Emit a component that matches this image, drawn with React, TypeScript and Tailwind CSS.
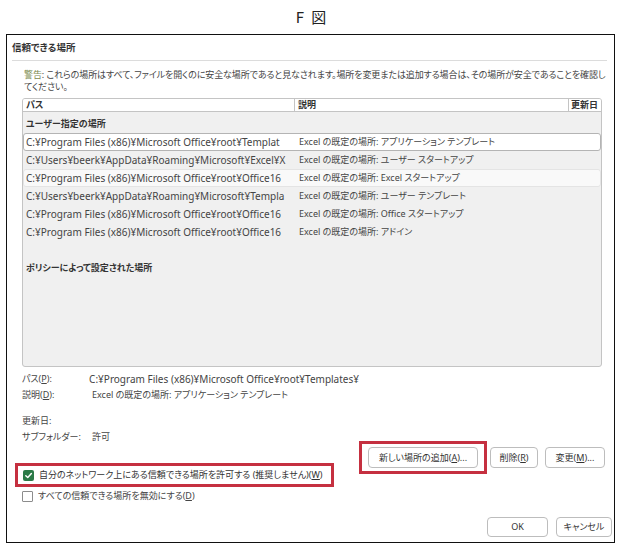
import React from "react";

const rows = [
  { path: "C:¥Program Files (x86)¥Microsoft Office¥root¥Templat", desc: "Excel の既定の場所: アプリケーション テンプレート", state: "selected" },
  { path: "C:¥Users¥beerk¥AppData¥Roaming¥Microsoft¥Excel¥X", desc: "Excel の既定の場所: ユーザー スタートアップ", state: "" },
  { path: "C:¥Program Files (x86)¥Microsoft Office¥root¥Office16", desc: "Excel の既定の場所: Excel スタートアップ", state: "hover" },
  { path: "C:¥Users¥beerk¥AppData¥Roaming¥Microsoft¥Templa", desc: "Excel の既定の場所: ユーザー テンプレート", state: "" },
  { path: "C:¥Program Files (x86)¥Microsoft Office¥root¥Office16", desc: "Excel の既定の場所: Office スタートアップ", state: "" },
  { path: "C:¥Program Files (x86)¥Microsoft Office¥root¥Office16", desc: "Excel の既定の場所: アドイン", state: "" },
];

function Btn({ label, accel, suffix = "", className = "" }: { label: string; accel: string; suffix?: string; className?: string }) {
  return (
    <div className={`h-[21px] flex items-center justify-center bg-white border border-[#bdbdbd] rounded-[4px] text-[9px] text-[#333] whitespace-nowrap ${className}`}>
      {label}(<span className="underline">{accel}</span>){suffix}
    </div>
  );
}

export default function App() {
  return (
    <div className="w-[624px] h-[556px] bg-white font-['Noto_Sans','Noto_Sans_CJK_JP',sans-serif] [font-feature-settings:'palt'] text-[#333]">
      <div className="h-[34px] flex items-center justify-center font-['Noto_Sans_CJK_JP',sans-serif] text-[15px] text-[#222] tracking-[2px]">F 図</div>

      <div className="ml-[6px] w-[609px] h-[509px] border border-[#111] flex flex-col">
        <div className="h-[25px] flex items-center pl-[5px] pt-[1px] text-[9.5px] font-bold text-[#333]">信頼できる場所</div>
        <div className="ml-[5px] mr-[7px] h-px bg-[#dcdcdc]" />

        <div className="mt-[8px] pl-[17px] text-[9px] leading-[12px] text-[#444] whitespace-nowrap tracking-[-0.1px]">
          <span className="text-[#7d8a4e]">警告</span>: これらの場所はすべて、ファイルを開くのに安全な場所であると見なされます。場所を変更または追加する場合は、その場所が安全であることを確認し
          <br />
          てください。
        </div>

        <div className="mt-[5px] ml-[15px] w-[580px] h-[269px] bg-[#f0f0f0] border border-[#c4c4c4] rounded-[3px] flex flex-col overflow-hidden">
          <div className="h-[13px] flex bg-white text-[9px] font-bold text-[#333]">
            <div className="w-[272px] border-r border-b border-[#c4c4c4] pl-[3px] flex items-center">パス</div>
            <div className="w-[274px] border-r border-b border-[#c4c4c4] pl-[3px] flex items-center">説明</div>
            <div className="flex-1 border-b border-[#c4c4c4] pl-[2px] flex items-center whitespace-nowrap">更新日</div>
          </div>
          <div className="h-[21px] flex items-center pl-[3px] pt-[2px] text-[9px] font-bold text-[#333]">ユーザー指定の場所</div>
          {rows.map((r, i) => (
            <div
              key={i}
              className={`h-[18px] flex items-center text-[9px] text-[#444] whitespace-nowrap ${
                r.state === "selected"
                  ? "bg-white border border-[#b4b4b4] rounded-[3px]"
                  : r.state === "hover"
                  ? "bg-[#f9f9f9] border border-[#e4e4e4] rounded-[3px]"
                  : "border border-transparent"
              }`}
            >
              <div className="w-[272px] pl-[2px] overflow-hidden text-[10px]">{r.path}</div>
              <div className="pl-[3px]">{r.desc}</div>
            </div>
          ))}
          <div className="mt-[18px] h-[18px] flex items-center pl-[3px] text-[9px] font-bold text-[#333]">ポリシーによって設定された場所</div>
        </div>

        <div className="flex">
          <div className="w-[352px] flex flex-col">
            <div className="mt-[4px] ml-[15px] text-[9px] text-[#444] whitespace-nowrap">
              <div className="h-[16px] flex items-center">
                <div className="w-[70px]">パス(<span className="underline">P</span>):</div>
                <div className="text-[10px]">C:¥Program Files (x86)¥Microsoft Office¥root¥Templates¥</div>
              </div>
              <div className="h-[16px] flex items-center">
                <div className="w-[70px]">説明(<span className="underline">D</span>):</div>
                <div>Excel の既定の場所: アプリケーション テンプレート</div>
              </div>
              <div className="mt-[10px] h-[16px] flex items-center">
                <div className="w-[70px]">更新日:</div>
              </div>
              <div className="h-[16px] flex items-center">
                <div className="w-[70px]">サブフォルダー:</div>
                <div>許可</div>
              </div>
            </div>

            <div className="mt-[18px] ml-[8px] w-fit pr-[8px] h-[24px] border-[3px] border-[#c53040] flex items-center pl-[5px] text-[9px] text-[#333] whitespace-nowrap">
              <div className="w-[11px] h-[11px] shrink-0 bg-[#2b7a47] rounded-[2px] flex items-center justify-center mr-[5px]">
                <svg width="9" height="9" viewBox="0 0 10 10">
                  <path d="M2 5.2 L4.2 7.3 L8.2 2.8" stroke="white" strokeWidth="1.6" fill="none" strokeLinecap="round" strokeLinejoin="round" />
                </svg>
              </div>
              自分のネットワーク上にある信頼できる場所を許可する (推奨しません)(<span className="underline">W</span>)
            </div>
            <div className="mt-[1px] ml-[15px] h-[16px] flex items-center text-[9px] text-[#444] whitespace-nowrap">
              <div className="w-[11px] h-[11px] shrink-0 border border-[#8c8c8c] bg-white rounded-[1px] mr-[5px]" />
              すべての信頼できる場所を無効にする(<span className="underline">D</span>)
            </div>
          </div>

          <div className="flex-1 flex justify-end items-start pr-[10px]">
            <div className="mt-[74px] flex items-center gap-[3px]">
              <div className="border-[3px] border-[#c53040] px-[6px] py-[3px]">
                <Btn label="新しい場所の追加" accel="A" suffix="..." className="w-[110px]" />
              </div>
              <Btn label="削除" accel="R" className="w-[48px]" />
              <Btn label="変更" accel="M" suffix="..." className="w-[60px] ml-[4px]" />
            </div>
          </div>
        </div>

        <div className="mt-auto mb-[5px] flex justify-end gap-[8px] pr-[2px]">
          <div className="w-[61px] h-[20px] flex items-center justify-center bg-white border border-[#bdbdbd] rounded-[4px] text-[9px] text-[#333]">OK</div>
          <div className="w-[56px] h-[20px] flex items-center justify-center bg-white border border-[#bdbdbd] rounded-[4px] text-[9px] text-[#333]">キャンセル</div>
        </div>
      </div>
    </div>
  );
}
